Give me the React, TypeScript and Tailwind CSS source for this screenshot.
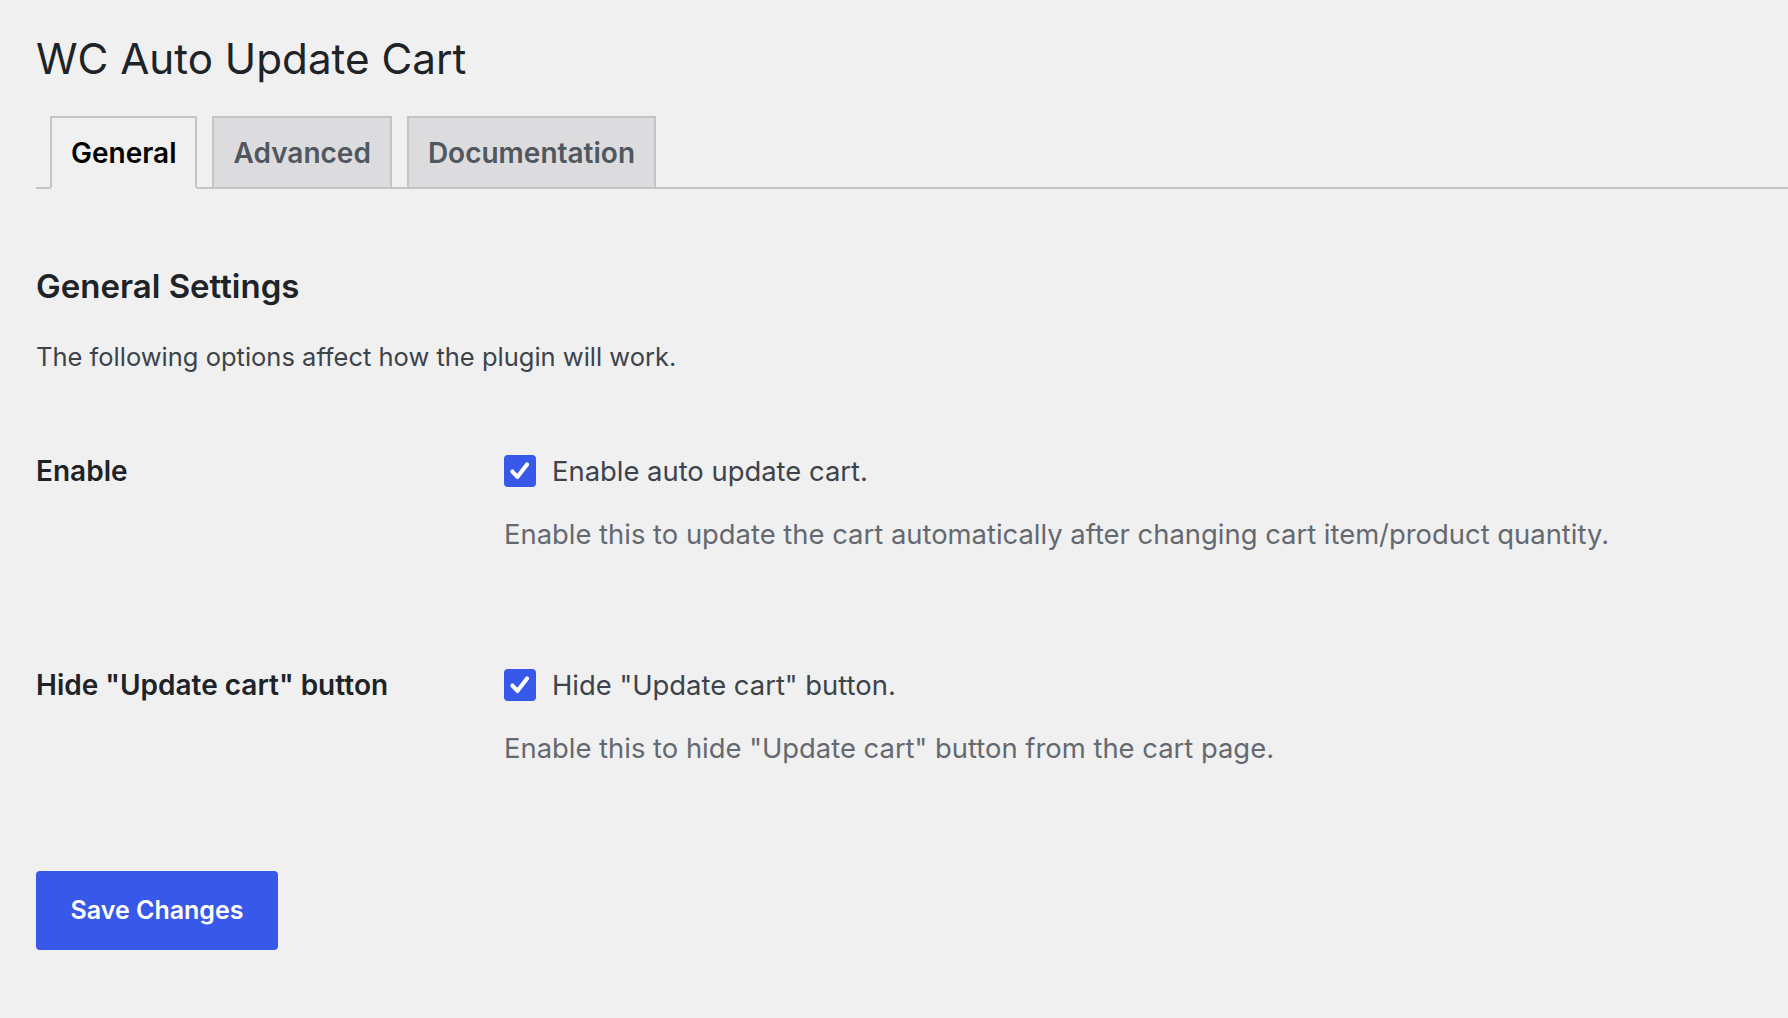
import React from "react";

const font = { fontFamily: "Inter, 'Noto Sans', sans-serif" };

function Check() {
  return (
    <span className="flex h-[32px] w-[32px] shrink-0 items-center justify-center rounded-[4px] bg-[#3858e9]">
      <svg width="26" height="26" viewBox="0 0 24 24" fill="none">
        <path d="M5 12.5l4.6 5L18.5 6" stroke="#fff" strokeWidth="3.8" strokeLinecap="round" strokeLinejoin="round" />
      </svg>
    </span>
  );
}

function Row({ label, box, help, mt }: { label: string; box: string; help: string; mt: string }) {
  return (
    <div className={`flex ${mt}`}>
      <div className="w-[468px] shrink-0 text-[28px] font-semibold leading-[32px] text-[#1d2327]">{label}</div>
      <div className="flex flex-col">
        <label className="flex items-center gap-[16px]">
          <Check />
          <span className="text-[27.4px] leading-[32px] text-[#3c434a]">{box}</span>
        </label>
        <p className="mt-[29px] text-[27.4px] leading-[36px] text-[#646970]">{help}</p>
      </div>
    </div>
  );
}

export default function App() {
  const tabs = ["General", "Advanced", "Documentation"];
  return (
    <div className="min-h-[1018px] bg-[#f0f0f1] pl-[36px] pt-[33px]" style={font}>
      <h1 className="text-[42.2px] font-normal leading-[52px] text-[#1d2327]">WC Auto Update Cart</h1>

      <nav className="mt-[31px] flex items-end gap-[15px] border-b-2 border-[#c3c4c7] pl-[14px]">
        {tabs.map((t, i) => (
          <a
            key={t}
            className={
              i === 0
                ? "-mb-[2px] flex h-[73px] items-center border-2 border-[#c3c4c7] border-b-[#f0f0f1] bg-[#f0f0f1] px-[19px] text-[28px] font-semibold text-black"
                : "-mb-[2px] flex h-[73px] items-center border-2 border-[#c3c4c7] bg-[#dcdcde] px-[19px] text-[28px] font-semibold text-[#50575e]"
            }
          >
            {t}
          </a>
        ))}
      </nav>

      <h2 className="mt-[77px] text-[33px] font-semibold leading-[40px] text-[#1d2327]">General Settings</h2>
      <p className="mt-[33px] text-[25.5px] leading-[36px] text-[#3c434a]">The following options affect how the plugin will work.</p>

      <Row
        mt="mt-[80px]"
        label="Enable"
        box="Enable auto update cart."
        help="Enable this to update the cart automatically after changing cart item/product quantity."
      />
      <Row
        mt="mt-[117px]"
        label={'Hide "Update cart" button'}
        box={'Hide "Update cart" button.'}
        help={'Enable this to hide "Update cart" button from the cart page.'}
      />

      <button className="mt-[105px] h-[79px] w-[242px] rounded-[4px] bg-[#3858e9] text-[25px] font-semibold text-white">
        Save Changes
      </button>
    </div>
  );
}
